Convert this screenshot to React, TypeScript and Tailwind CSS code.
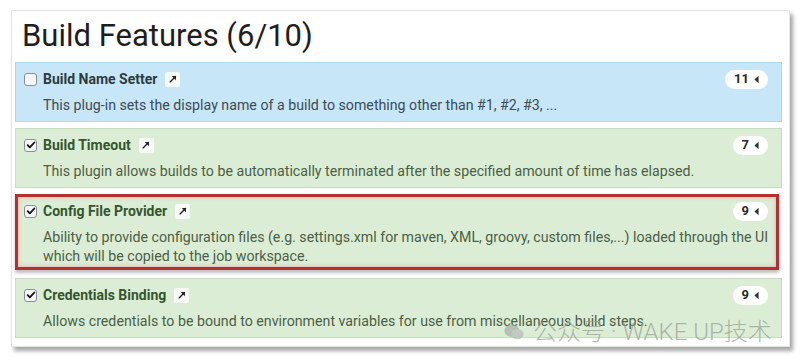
import React from 'react';

type Feature = {
  name: string;
  count: number;
  checked: boolean;
  lines: string[];
  tone: 'blue' | 'green';
  highlight?: boolean;
};

const features: Feature[] = [
  {
    name: 'Build Name Setter',
    count: 11,
    checked: false,
    tone: 'blue',
    lines: ['This plug-in sets the display name of a build to something other than #1, #2, #3, ...'],
  },
  {
    name: 'Build Timeout',
    count: 7,
    checked: true,
    tone: 'green',
    lines: ['This plugin allows builds to be automatically terminated after the specified amount of time has elapsed.'],
  },
  {
    name: 'Config File Provider',
    count: 9,
    checked: true,
    tone: 'green',
    highlight: true,
    lines: [
      'Ability to provide configuration files (e.g. settings.xml for maven, XML, groovy, custom files,...) loaded through the UI',
      'which will be copied to the job workspace.',
    ],
  },
  {
    name: 'Credentials Binding',
    count: 9,
    checked: true,
    tone: 'green',
    lines: ['Allows credentials to be bound to environment variables for use from miscellaneous build steps.'],
  },
];

const Checkbox = ({ checked }: { checked: boolean }) => (
  <span className="flex h-[13px] w-[13px] items-center justify-center rounded-[3px] border border-[#8a8f92] bg-[#f4f6f7]">
    {checked && (
      <svg viewBox="0 0 12 12" className="h-[10px] w-[10px]">
        <path d="M2 6.2l2.6 2.6L10 3" fill="none" stroke="#111" strokeWidth="2.2" strokeLinecap="round" strokeLinejoin="round" />
      </svg>
    )}
  </span>
);

const LinkIcon = () => (
  <span className="flex h-[15px] w-[15px] items-center justify-center rounded-[2px] bg-[#f7f9f6]">
    <svg viewBox="0 0 12 12" className="h-[10px] w-[10px]">
      <path d="M2.5 9.5L9 3" stroke="#222" strokeWidth="1.6" strokeLinecap="round" />
      <path d="M4.5 2.5H9.5V7.5Z" fill="#222" />
    </svg>
  </span>
);

const Badge = ({ n }: { n: number }) => (
  <span className="flex h-[19px] items-center gap-[5px] rounded-full bg-white px-[9px] text-[13px] font-bold text-[#2a2a2a]">
    {n}
    <svg viewBox="0 0 6 10" className="h-[9px] w-[5px]">
      <path d="M5.5 0.5V9.5L0.5 5Z" fill="#333" />
    </svg>
  </span>
);

const FeatureRow = ({ f }: { f: Feature }) => {
  const bg = f.tone === 'blue' ? 'bg-[#c7e6f8]' : 'bg-[#dcedd5]';
  const title = f.tone === 'blue' ? 'text-[#2c3b3e]' : 'text-[#34562f]';
  const desc = f.tone === 'blue' ? 'text-[#3c4c52]' : 'text-[#4b5f47]';
  let box = 'border pt-[6px] pb-[6px] pl-[8px] pr-[13px] ';
  if (f.highlight) {
    box = 'mr-[3px] mb-[2px] border-[3px] border-[#b52f2f] pt-[4px] pb-[1px] pl-[6px] pr-[8px] shadow-[inset_0_0_4px_#e7a4a4,0_3px_3px_rgba(0,0,0,0.25)]';
  } else if (f.tone === 'blue') {
    box += 'border-[#aed6ee]';
  } else {
    box += 'border-[#c5dcbd]';
  }
  return (
    <div className={`${bg} ${box}`}>
      <div className="flex h-[20px] items-center">
        <Checkbox checked={f.checked} />
        <span className={`ml-[6px] text-[14px] font-bold ${title}`}>{f.name}</span>
        <span className="ml-[8px]">
          <LinkIcon />
        </span>
        <span className="ml-auto">
          <Badge n={f.count} />
        </span>
      </div>
      <div className={`mt-[7px] whitespace-nowrap pl-[19px] text-[14.2px] leading-[19px] ${desc}`}>
        {f.lines.map((l) => (
          <div key={l}>{l}</div>
        ))}
      </div>
    </div>
  );
};

export default function App() {
  return (
    <div className="relative h-[362px] w-[800px] overflow-hidden bg-white pl-[11px] pt-[10px] font-['Roboto','Liberation_Sans',sans-serif]">
      <div className="w-[779px] border border-[#e4e4e4] bg-white pb-[8px] pl-[3px] pr-[7px] shadow-[3px_4px_4px_rgba(0,0,0,0.35)]">
        <h1 className="flex h-[51px] items-center pl-[7px] text-[31px] font-normal text-[#1e1e1e]">Build Features (6/10)</h1>
        <div className="flex flex-col gap-[6px]">
          {features.map((f) => (
            <FeatureRow key={f.name} f={f} />
          ))}
        </div>
      </div>
      <div className="pointer-events-none absolute left-[503px] top-[320px] flex items-center gap-[8px] text-[24px] leading-none text-[#98a198]/75 font-['Roboto','Noto_Sans_CJK_SC',sans-serif] font-light">
        <svg viewBox="0 0 30 26" className="h-[18px] w-[22px] opacity-70">
          <ellipse cx="12" cy="11" rx="11" ry="9" fill="#a7ada7" />
          <ellipse cx="20" cy="16" rx="9" ry="7.5" fill="#b7bcb7" />
        </svg>
        <span>公众号 · WAKE UP技术</span>
      </div>
    </div>
  );
}
